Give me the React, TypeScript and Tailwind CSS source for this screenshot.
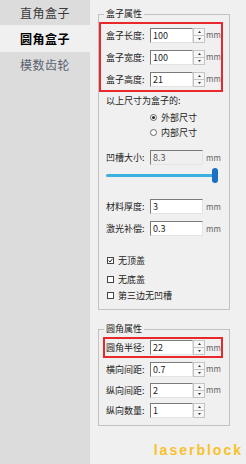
const tabs = [
  { label: "直角盒子", active: false, h: "h-[25px]", color: "text-[#3a3a3a]" },
  { label: "圆角盒子", active: true, h: "h-[27px]", color: "text-black" },
  { label: "模数齿轮", active: false, h: "h-[26px]", color: "text-[#5b6272]" },
];

const Spinner = () => (
  <div className="flex h-[15px] w-[12px] shrink-0 flex-col">
    <div className="flex h-[8px] items-center justify-center border border-[#c4c4c4] bg-[#f6f6f6]">
      <svg width="3" height="2" viewBox="0 0 3 2">
        <path d="M1.5 0 L3 2 L0 2 Z" fill="#333" />
      </svg>
    </div>
    <div className="flex h-[7px] items-center justify-center border border-t-0 border-[#c4c4c4] bg-[#f6f6f6]">
      <svg width="3" height="2" viewBox="0 0 3 2">
        <path d="M0 0 L3 0 L1.5 2 Z" fill="#333" />
      </svg>
    </div>
  </div>
);

const Box = ({ value, w, disabled }: { value: string; w: string; disabled?: boolean }) => (
  <div
    className={`flex h-[15px] ${w} shrink-0 items-center border border-t-[#7a7a7a] border-l-[#7a7a7a] border-b-[#e3e3e3] border-r-[#e3e3e3] pl-[2px] ${
      disabled ? "bg-[#f0f0f0] text-[#555]" : "bg-white text-[#222]"
    }`}
  >
    {value}
  </div>
);

const Mm = ({ ml }: { ml: string }) => <span className={`${ml} text-[8px] text-[#666]`}>mm</span>;

// row with a spin box (x 150..205)
const SpinRow = ({ label, value, h, mm = true }: { label: string; value: string; h: string; mm?: boolean }) => (
  <div className={`flex ${h} items-center`}>
    <span className="w-[44px] shrink-0">{label}</span>
    <Box value={value} w="w-[43px]" />
    <Spinner />
    {mm && <Mm ml="ml-[1px]" />}
  </div>
);

const PlainRow = ({ label, value, h, mt, disabled }: { label: string; value: string; h: string; mt: string; disabled?: boolean }) => (
  <div className={`flex ${h} ${mt} items-center pl-[7px]`}>
    <span className="w-[44px] shrink-0">{label}</span>
    <Box value={value} w="w-[53px]" disabled={disabled} />
    <Mm ml="ml-[3px]" />
  </div>
);

const Check = ({ label, checked, h, mt = "" }: { label: string; checked?: boolean; h: string; mt?: string }) => (
  <div className={`flex ${h} ${mt} items-center pl-[8px]`}>
    <div className="flex h-[7px] w-[7px] items-center justify-center border border-[#444] bg-white">
      {checked && (
        <svg width="5" height="5" viewBox="0 0 5 5">
          <path d="M0.5 2.5 L2 4 L4.5 0.8" stroke="#222" strokeWidth="1" fill="none" />
        </svg>
      )}
    </div>
    <span className="ml-[4px]">{label}</span>
  </div>
);

const Radio = ({ label, checked, h }: { label: string; checked?: boolean; h: string }) => (
  <div className={`flex ${h} items-center pl-[51px]`}>
    <div className="flex h-[7px] w-[7px] items-center justify-center rounded-full border border-[#666] bg-white">
      {checked && <div className="h-[3px] w-[3px] rounded-full bg-[#222]" />}
    </div>
    <span className="ml-[4px]">{label}</span>
  </div>
);

export default function App() {
  return (
    <div className="flex h-[464px] w-[246px] overflow-hidden bg-[#f0f0f0] font-['Noto_Sans_CJK_SC','Liberation_Sans',sans-serif] text-[9px] leading-none text-[#222]">
      {/* tabs */}
      <div className="flex w-[90px] shrink-0 flex-col bg-[#dcdcdc]">
        {tabs.map((t) => (
          <div
            key={t.label}
            className={`flex ${t.h} items-center justify-center text-[12px] tracking-[0.5px] ${t.color} ${
              t.active ? "bg-[#f0f0f0] font-bold" : ""
            }`}
          >
            {t.label}
          </div>
        ))}
      </div>

      {/* settings */}
      <div className="flex flex-1 flex-col pl-[8px] pt-[8px]">
        <fieldset className="w-[132px] border border-[#c2c2c2] pb-[6px]">
          <legend className="ml-[5px] px-[2px] leading-[12px] text-[#222]">盒子属性</legend>
          <div className="mt-[2px] w-[124px] border-2 border-[#e8282b] pl-[5px]">
            <SpinRow label="盒子长度:" value="100" h="h-[22px]" />
            <SpinRow label="盒子宽度:" value="100" h="h-[22px]" />
            <SpinRow label="盒子高度:" value="21" h="h-[22px]" />
          </div>
          <div className="flex h-[17px] items-center pl-[7px]">以上尺寸为盒子的:</div>
          <Radio label="外部尺寸" checked h="h-[16px]" />
          <Radio label="内部尺寸" h="h-[15px]" />
          <PlainRow label="凹槽大小:" value="8.3" h="h-[17px]" mt="mt-[9px]" disabled />
          <div className="flex h-[18px] items-center pl-[7px]">
            <div className="relative h-[3px] w-[112px] rounded-full bg-[#3cb1e0]">
              <div className="absolute right-0 top-[-6px] h-[15px] w-[6px] rounded-full bg-[#1b6fc4]" />
            </div>
          </div>
          <PlainRow label="材料厚度:" value="3" h="h-[15px]" mt="mt-[15px]" />
          <PlainRow label="激光补偿:" value="0.3" h="h-[15px]" mt="mt-[7px]" />
          <Check label="无顶盖" checked h="h-[16px]" mt="mt-[16px]" />
          <Check label="无底盖" h="h-[16px]" mt="mt-[3px]" />
          <Check label="第三边无凹槽" h="h-[16px]" />
        </fieldset>

        <fieldset className="mt-[13px] w-[132px] border border-[#c2c2c2] pb-[5px]">
          <legend className="ml-[5px] px-[2px] leading-[12px] text-[#222]">圆角属性</legend>
          <div className="ml-[4px] mt-[2px] w-[120px] border-2 border-[#e8282b] pl-[1px]">
            <SpinRow label="圆角半径:" value="22" h="h-[17px]" />
          </div>
          <div className="pl-[7px]">
            <SpinRow label="横向间距:" value="0.7" h="h-[22px]" />
            <SpinRow label="纵向间距:" value="2" h="h-[20px]" />
            <SpinRow label="纵向数量:" value="1" h="h-[20px]" mm={false} />
          </div>
        </fieldset>

        <div className="mt-[17px] pr-[3px] text-right font-['Liberation_Sans',sans-serif] text-[14px] font-bold tracking-[2px] text-[#f7c12d]">
          laserblock
        </div>
      </div>
    </div>
  );
}
